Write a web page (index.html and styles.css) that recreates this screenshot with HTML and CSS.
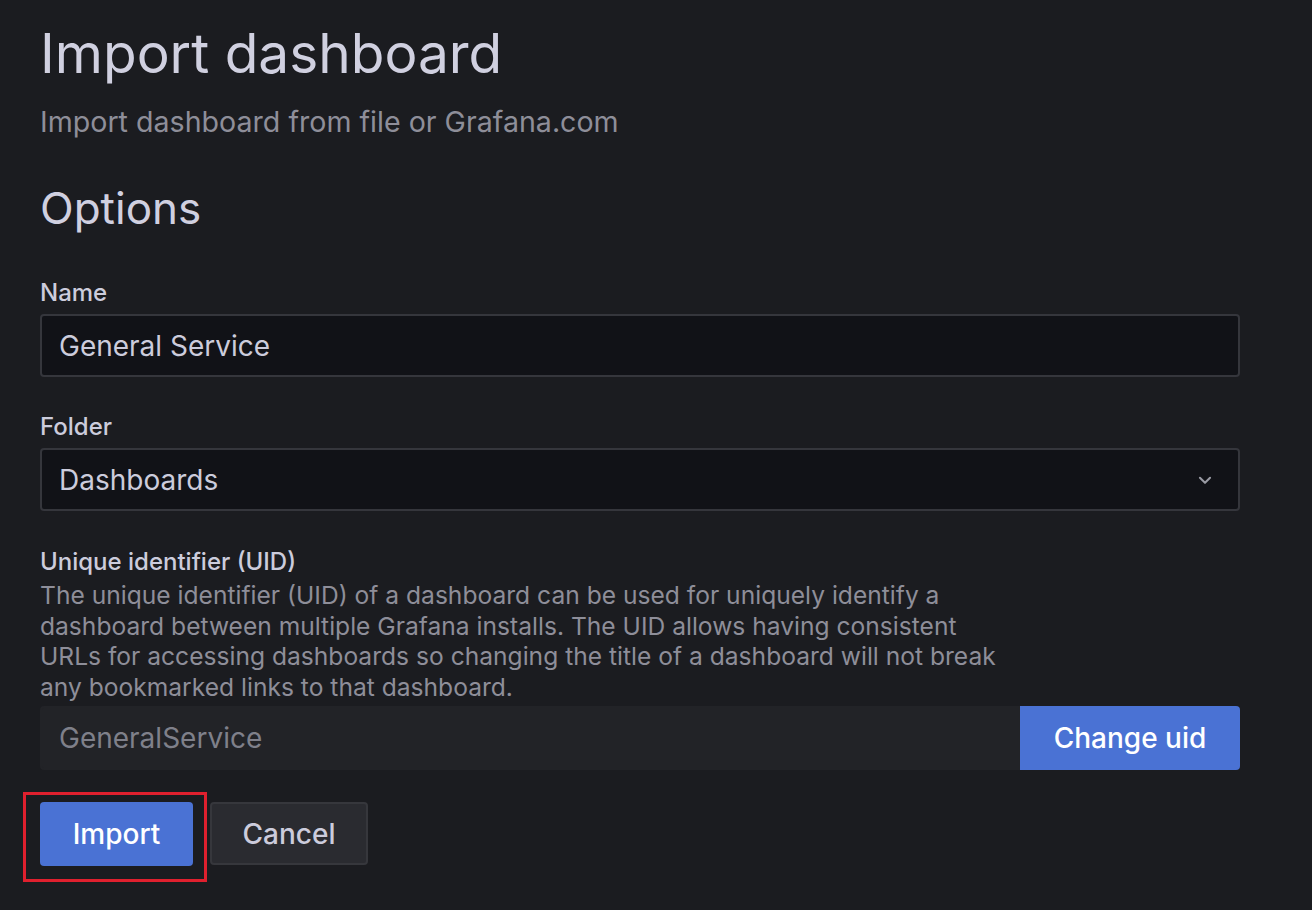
FILE: index.html
```html
<!DOCTYPE html>
<html>
<head>
<meta charset="utf-8">
<link rel="stylesheet" href="styles.css">
</head>
<body>
<div class="page">
  <h1 class="title">Import dashboard</h1>
  <p class="subtitle">Import dashboard from file or Grafana.com</p>
  <h2 class="section">Options</h2>

  <div class="field field-name">
    <label class="label">Name</label>
    <div class="input">General Service</div>
  </div>

  <div class="field field-folder">
    <label class="label">Folder</label>
    <div class="input select">
      <span>Dashboards</span>
      <svg class="chevron" width="16" height="16" viewBox="0 0 16 16"><path d="M3.5 6 L8 10.5 L12.5 6" fill="none" stroke="#9a9ba4" stroke-width="1.8" stroke-linecap="round" stroke-linejoin="round"/></svg>
    </div>
  </div>

  <div class="field field-uid">
    <label class="label">Unique identifier (UID)</label>
    <p class="desc">The unique identifier (UID) of a dashboard can be used for uniquely identify a dashboard between multiple Grafana installs. The UID allows having consistent URLs for accessing dashboards so changing the title of a dashboard will not break any bookmarked links to that dashboard.</p>
    <div class="uid-row">
      <div class="input disabled">GeneralService</div>
      <button class="btn primary addon">Change uid</button>
    </div>
  </div>

  <div class="actions">
    <div class="highlight">
      <button class="btn primary import">Import</button>
    </div>
    <button class="btn secondary">Cancel</button>
  </div>
</div>
</body>
</html>
```

FILE: styles.css
```css
html, body {
  margin: 0;
  padding: 0;
  background: #1b1c20;
  height: 100%;
}
body {
  font-family: Inter, "Noto Sans", sans-serif;
  color: #ccccdc;
}
.page {
  padding: 20px 72px 0 40px;
  width: 1200px;
}
.title {
  margin: 0;
  font-size: 55px;
  font-weight: 400;
  line-height: 66px;
  color: #d0d0e0;
}
.subtitle {
  margin: 19px 0 0 0;
  font-size: 28.6px;
  line-height: 34px;
  color: #8e8e99;
}
.section {
  margin: 41px 0 0 0;
  font-size: 44px;
  font-weight: 400;
  line-height: 56px;
  color: #d0d0e0;
}
.field {
  display: flex;
  flex-direction: column;
}
.field-name {
  margin-top: 42px;
}
.field-folder {
  margin-top: 35px;
}
.field-uid {
  margin-top: 36px;
}
.label {
  font-size: 24px;
  font-weight: 500;
  line-height: 30px;
  color: #ccccdc;
  margin-bottom: 6px;
}
.input {
  box-sizing: border-box;
  height: 63px;
  background: #111217;
  border: 2px solid #35363c;
  border-radius: 4px;
  padding: 0 17px;
  font-size: 28px;
  color: #ccccdc;
  display: flex;
  align-items: center;
}
.select {
  justify-content: space-between;
  padding-right: 24px;
}
.chevron {
  width: 18px;
  height: 18px;
}
.desc {
  margin: -3px 0 4px 0;
  font-size: 24.6px;
  line-height: 30.5px;
  color: #8e8e99;
  max-width: 964px;
}
.uid-row {
  display: flex;
  height: 64px;
}
.uid-row .input {
  flex: 1;
  height: 64px;
  background: #222327;
  border-color: #222327;
  color: #7f808a;
  border-radius: 4px 0 0 4px;
}
.btn {
  font-family: Inter, "Noto Sans", sans-serif;
  font-size: 28px;
  font-weight: 500;
  border: none;
  border-radius: 4px;
  padding: 0;
  height: 64px;
  cursor: pointer;
}
.primary {
  background: #4a72d4;
  color: #ffffff;
}
.addon {
  width: 220px;
  border-radius: 0 4px 4px 0;
}
.secondary {
  box-sizing: border-box;
  background: #2a2b30;
  color: #ccccdc;
  border: 2px solid #36373c;
  width: 158px;
  height: 63px;
}
.actions {
  display: flex;
  align-items: flex-start;
  gap: 17px;
  margin-top: 32px;
}
.highlight {
  position: relative;
  display: flex;
}
.highlight::after {
  content: "";
  position: absolute;
  left: -17px;
  top: -10px;
  right: -14px;
  bottom: -16px;
  border: 3px solid #e0202e;
  pointer-events: none;
}
.import {
  width: 153px;
}
```
